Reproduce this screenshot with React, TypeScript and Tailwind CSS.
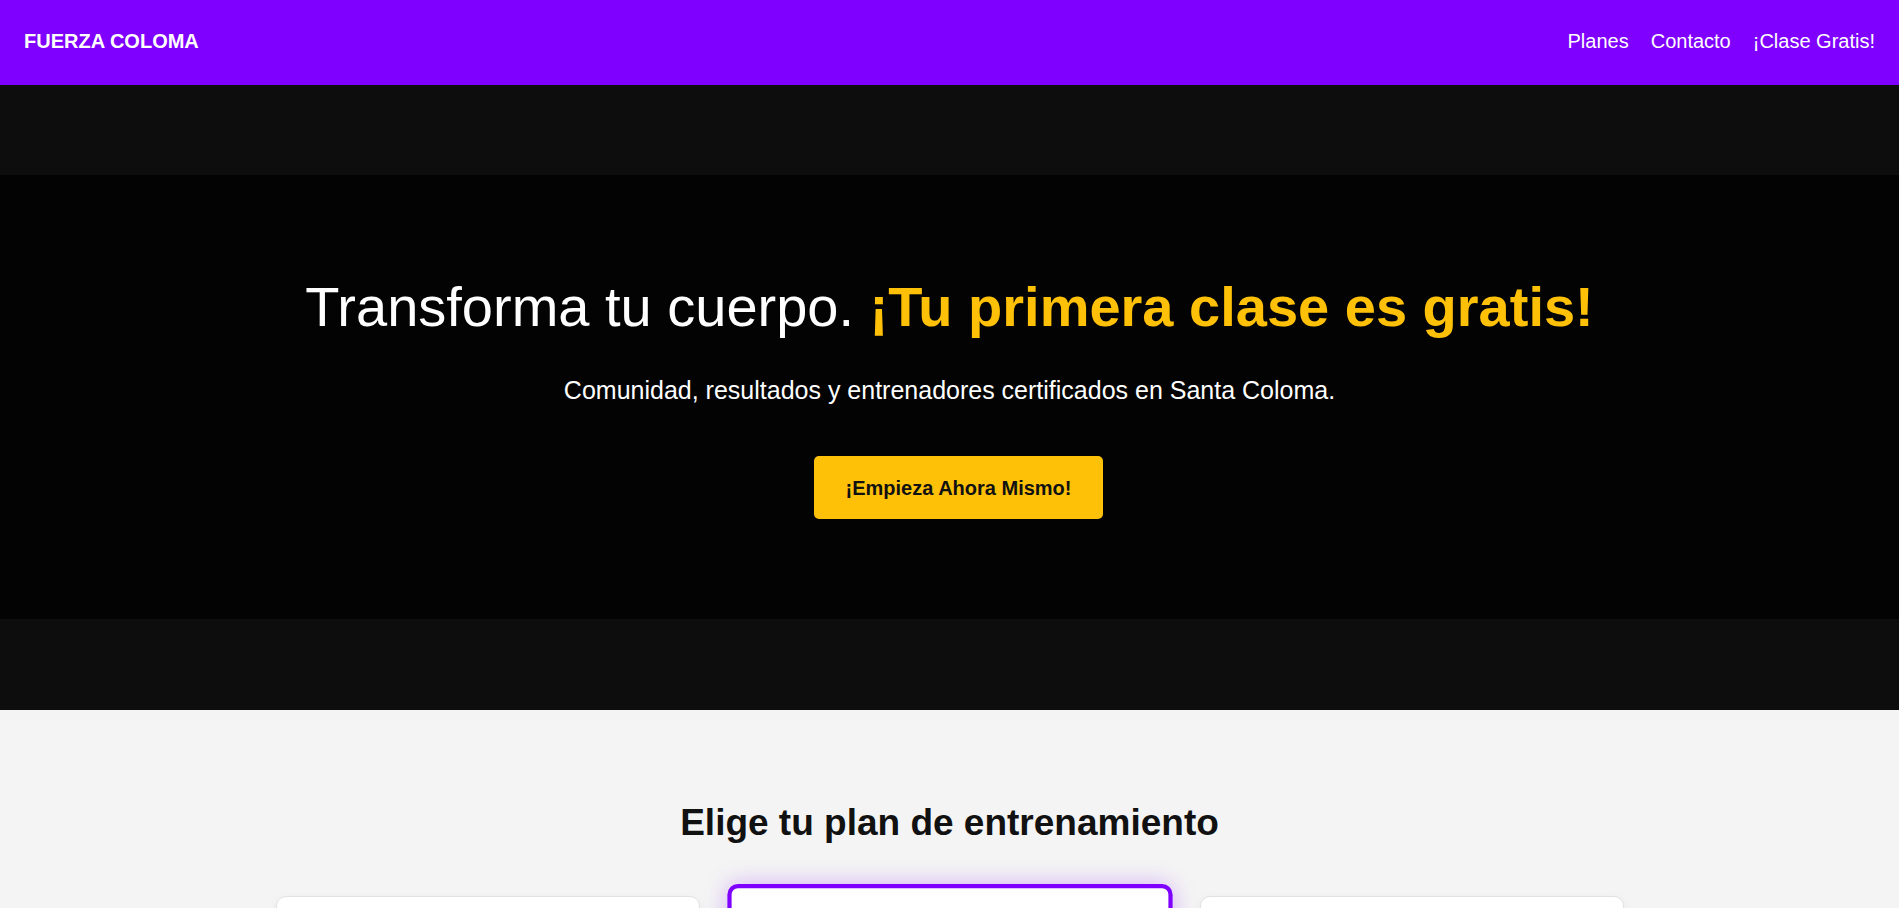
import React from "react";

type Plan = {
  name: string;
  price: string;
  features: string[];
  featured?: boolean;
};

const plans: Plan[] = [
  { name: "Plan Básico", price: "29€/mes", features: ["Acceso a sala", "Horario libre", "Vestuarios"] },
  { name: "Plan Premium", price: "49€/mes", features: ["Acceso a sala", "Clases dirigidas", "Plan de nutrición"], featured: true },
  { name: "Plan Élite", price: "79€/mes", features: ["Todo lo del Premium", "Entrenador personal", "Seguimiento mensual"] },
];

const App: React.FC = () => {
  return (
    <div className="min-h-screen bg-[#f4f4f4] font-['Liberation_Sans',Arial,sans-serif]">
      {/* HEADER */}
      <header className="h-[85px] bg-[#8000ff] px-6 pb-1 flex items-center justify-between text-white">
        <a href="#" className="text-[20px] font-bold leading-none">FUERZA COLOMA</a>
        <nav className="flex items-center gap-[22px] text-[20px] leading-none">
          <a href="#planes">Planes</a>
          <a href="#contacto">Contacto</a>
          <a href="#gratis">¡Clase Gratis!</a>
        </nav>
      </header>

      {/* HERO */}
      <section className="bg-[#0d0d0d] pt-[90px] pb-[91px]">
        <div className="bg-[#030303] pt-[100px] pb-[100px] flex flex-col items-center text-center text-white">
          <h1 className="text-[56px] leading-[1.15]">
            Transforma tu cuerpo. <span className="font-bold text-[#ffc107]">¡Tu primera clase es gratis!</span>
          </h1>
          <p className="mt-[37px] text-[25px] leading-[1.15]">
            Comunidad, resultados y entrenadores certificados en Santa Coloma.
          </p>
          <a
            href="#gratis"
            className="mt-[51px] ml-[18px] h-[63px] px-8 flex items-center rounded-[5px] bg-[#ffc107] text-[#111] text-[20px] font-bold"
          >
            ¡Empieza Ahora Mismo!
          </a>
        </div>
      </section>

      {/* PLANES */}
      <section id="planes" className="pt-[91px] pb-20">
        <h2 className="text-center text-[37px] leading-[1.2] font-bold text-[#111]">
          Elige tu plan de entrenamiento
        </h2>
        <div className="mt-[50px] w-[1348px] mx-auto grid grid-cols-3 gap-[38px]">
          {plans.map((plan) => (
            <div
              key={plan.name}
              className={`h-[480px] rounded-[10px] bg-white p-8 flex flex-col items-center text-center ${
                plan.featured
                  ? "border-4 border-[#8000ff] scale-105 shadow-[0_0_22px_rgba(128,0,255,0.28)]"
                  : "border border-[#e2e2e2] shadow-[0_4px_12px_rgba(0,0,0,0.06)]"
              }`}
            >
              <h3 className="text-[26px] font-bold text-[#111]">{plan.name}</h3>
              <p className="mt-4 text-[40px] font-bold text-[#8000ff]">{plan.price}</p>
              <ul className="mt-6 flex flex-col gap-3 text-[18px] text-[#333]">
                {plan.features.map((f) => (
                  <li key={f}>{f}</li>
                ))}
              </ul>
            </div>
          ))}
        </div>
      </section>
    </div>
  );
};

export default App;
